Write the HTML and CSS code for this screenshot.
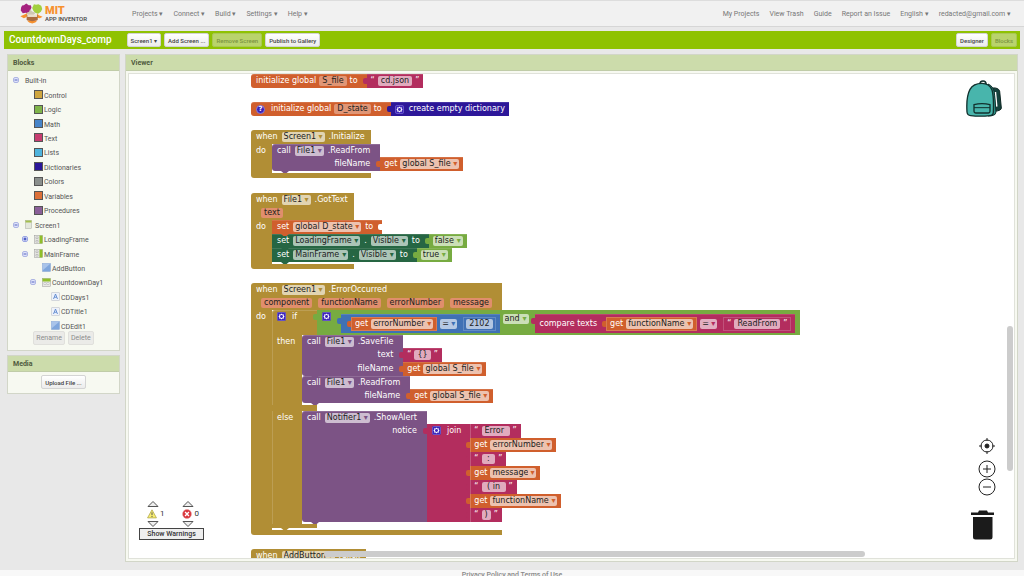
FILE: index.html
```html
<!DOCTYPE html>
<html lang="en">
<head>
<meta charset="utf-8">
<title>MIT App Inventor</title>
<link rel="stylesheet" href="styles.css">
</head>
<body>
<svg class="defs" aria-hidden="true">
  <symbol id="gear" viewBox="0 0 16 16"><rect width="16" height="16" rx="3" fill="#3a22b8"/><rect x="1" y="1" width="14" height="14" rx="2" fill="none" stroke="#8d80d8" stroke-width="1"/><path d="M8 2.500l1.500 2 2.500-.6v2.600L13.500 8 12 9.500v2.600l-2.500-.6-1.500 2-1.500-2-2.500.6V9.500L2.500 8 4 6.500V3.900l2.500.6z" fill="#fff"/><circle cx="8" cy="8" r="2.600" fill="#3a22b8"/></symbol>
  <symbol id="minus" viewBox="0 0 12 12"><rect x="1" y="1" width="10" height="10" rx="3" fill="#dfe4fb" stroke="#98a2dc" stroke-width="1.500"/><path d="M3 6h6" stroke="#4a58b8" stroke-width="1.800"/></symbol>
  <symbol id="plus" viewBox="0 0 12 12"><rect x="1" y="1" width="10" height="10" rx="3" fill="#dfe4fb" stroke="#7f8cdc" stroke-width="1.500"/><path d="M3 6h6M6 3v6" stroke="#2334b4" stroke-width="2"/></symbol>
  <symbol id="screen" viewBox="0 0 18 18"><rect x="3" y="1" width="12" height="16" fill="#e4e8dc" stroke="#a8aaa2"/><path d="M3 1h12v4H3z" fill="#a3bf4f"/></symbol>
  <symbol id="frame" viewBox="0 0 18 18"><rect x="1" y="1" width="16" height="16" fill="#e4e4e0" stroke="#999"/><path d="M11 1h6v16h-6z" fill="#8fbf2a"/><path d="M4 4h4v3H4zM4 11h4v3H4z" fill="#fff" stroke="#999"/></symbol>
  <symbol id="hframe" viewBox="0 0 18 18"><rect x="1" y="1" width="16" height="16" fill="#e9e9e4" stroke="#999"/><path d="M1 1h16v6H1z" fill="#8fbf2a"/><path d="M4 9h4v4H4zM10 9h4v4h-4z" fill="#fff" stroke="#aaa"/></symbol>
  <symbol id="btn" viewBox="0 0 18 18"><rect x="1" y="1" width="16" height="16" fill="#7fa6dc" stroke="#86a4d0"/><path d="M1 1h16L1 15z" fill="#a9c4ea"/></symbol>
  <symbol id="label" viewBox="0 0 18 18"><rect x="1" y="1" width="16" height="16" rx="1" fill="#eef2fa" stroke="#b4b8c2"/><path d="M5 14L9 4l4 10M6.500 10.500h5" fill="none" stroke="#5b88cf" stroke-width="1.800"/></symbol>
</svg>

<header class="top">
  <a class="logo" href="#">
    <svg viewBox="0 0 72 60" aria-hidden="true">
      <path d="M14 6l7-5 7 5h6l2 7-3 7 1 7-8 3-7-2-8 1-6-8 1-8 3-6z" fill="#a5227f"/>
      <path d="M43 3l6 2 7-2 8 5 3 9-4 8-8 6-9-3-5-7-3-7z" fill="#a2cf3f"/>
      <path d="M32 18l6 6 10 4-6 6H26l-7-5 10-4z" fill="#cfc7b4"/>
      <path d="M12 34l12-5-2 11-8 4-10-6zM52 29l5 6 11 4-8 5-8-2zM23 50h30l-6 6-9 3-9-3z" fill="#f7912f"/>
      <path d="M22 34h32v15q-16 6-32 0z" fill="#a96b42"/><path d="M24 33h28v7H24z" fill="#ecdfd0"/>
    </svg>
    <span class="logo-text"><b>MIT</b><span>APP INVENTOR</span></span>
  </a>
  <nav class="menu">
    <button>Projects ▾</button><button>Connect ▾</button><button>Build ▾</button><button>Settings ▾</button><button>Help ▾</button>
  </nav>
  <nav class="menu links">
    <a href="#">My Projects</a><a href="#">View Trash</a><a href="#">Guide</a><a href="#">Report an Issue</a><button>English ▾</button><button>redacted@gmail.com ▾</button>
  </nav>
</header>

<div class="toolbar">
  <h1>CountdownDays_comp</h1>
  <button class="tb">Screen1 ▾</button><button class="tb">Add Screen ...</button><button class="tb" disabled>Remove Screen</button><button class="tb">Publish to Gallery</button>
  <span class="spacer"></span>
  <button class="tb">Designer</button><button class="tb" disabled>Blocks</button>
</div>

<main class="columns">
  <aside class="side">
    <section class="panel">
      <h2>Blocks</h2>
      <div class="tree-box">
        <ul class="tree">
          <li class="l0"><svg class="tg"><use href="#minus"/></svg><span>Built-in</span></li>
          <li class="l1"><i class="sw gold"></i><span>Control</span></li>
          <li class="l1"><i class="sw lime"></i><span>Logic</span></li>
          <li class="l1"><i class="sw blue"></i><span>Math</span></li>
          <li class="l1"><i class="sw pink"></i><span>Text</span></li>
          <li class="l1"><i class="sw sky"></i><span>Lists</span></li>
          <li class="l1"><i class="sw navy"></i><span>Dictionaries</span></li>
          <li class="l1"><i class="sw grey"></i><span>Colors</span></li>
          <li class="l1"><i class="sw orange"></i><span>Variables</span></li>
          <li class="l1"><i class="sw purple"></i><span>Procedures</span></li>
          <li class="l0"><svg class="tg"><use href="#minus"/></svg><svg class="ic"><use href="#screen"/></svg><span>Screen1</span></li>
          <li class="l2"><svg class="tg"><use href="#plus"/></svg><svg class="ic"><use href="#frame"/></svg><span>LoadingFrame</span></li>
          <li class="l2"><svg class="tg"><use href="#minus"/></svg><svg class="ic"><use href="#frame"/></svg><span>MainFrame</span></li>
          <li class="l3"><svg class="ic"><use href="#btn"/></svg><span>AddButton</span></li>
          <li class="l4"><svg class="tg"><use href="#minus"/></svg><svg class="ic"><use href="#hframe"/></svg><span>CountdownDay1</span></li>
          <li class="l5"><svg class="ic"><use href="#label"/></svg><span>CDDays1</span></li>
          <li class="l5"><svg class="ic"><use href="#label"/></svg><span>CDTitle1</span></li>
          <li class="l5"><svg class="ic"><use href="#btn"/></svg><span>CDEdit1</span></li>
        </ul>
      </div>
      <div class="actions"><button class="flat" disabled>Rename</button><button class="flat" disabled>Delete</button></div>
    </section>
    <section class="panel">
      <h2>Media</h2>
      <div class="upload"><button class="tb">Upload File ...</button></div>
    </section>
  </aside>

  <section class="panel viewer">
    <h2>Viewer</h2>
    <div class="workspace">
      <div class="canvas">

        <div class="node n1 line">
          <div class="blk c-orange first pre"><span>initialize global</span><input class="f" aria-label="Variable name" value="S_file"><span>to</span></div>
          <div class="blk val c-pink"><span>“</span><input class="f" aria-label="Text" value="cd.json"><span>”</span></div>
        </div>

        <div class="node n2 line">
          <div class="blk c-orange first pre"><button class="help" aria-label="Help">?</button><span>initialize global</span><input class="f" aria-label="Variable name" value="D_state"><span>to</span></div>
          <div class="blk val c-navy wide"><svg class="gear"><use href="#gear"/></svg><span>create empty dictionary</span></div>
        </div>

        <div class="node n3 event">
          <div class="head"><div class="when"><span>when</span><label class="dd"><select aria-label="Component"><option>Screen1</option></select></label><span>.Initialize</span></div></div>
          <div class="mid"><div class="do">do</div><div class="stack">
            <div class="call c-purple">
              <div class="cell top-cell"><span>call</span><label class="dd"><select aria-label="Component"><option>File1</option></select></label><span>.ReadFrom</span></div>
              <div class="cell arg">fileName</div><div class="blk val c-orange"><span>get</span><label class="dd"><select aria-label="Variable"><option>global S_file</option></select></label></div>
            </div>
          </div></div>
          <div class="foot"></div>
        </div>

        <div class="node n4 event">
          <div class="head"><div class="when"><span>when</span><label class="dd"><select aria-label="Component"><option>File1</option></select></label><span>.GotText</span></div>
            <div class="params"><span>text</span></div></div>
          <div class="mid"><div class="do">do</div><div class="stack">
            <div class="line stmt c-orange"><div class="blk pre socket"><span>set</span><label class="dd"><select aria-label="Variable"><option>global D_state</option></select></label><span>to</span></div></div>
            <div class="line stmt c-green"><div class="blk pre"><span>set</span><label class="dd"><select aria-label="Component"><option>LoadingFrame</option></select></label><span>.</span><label class="dd"><select aria-label="Property"><option>Visible</option></select></label><span>to</span></div><div class="blk val c-lime"><label class="dd"><select aria-label="Value"><option>false</option></select></label></div></div>
            <div class="line stmt c-green"><div class="blk pre"><span>set</span><label class="dd"><select aria-label="Component"><option>MainFrame</option></select></label><span>.</span><label class="dd"><select aria-label="Property"><option>Visible</option></select></label><span>to</span></div><div class="blk val c-lime"><label class="dd"><select aria-label="Value"><option>true</option></select></label></div></div>
          </div></div>
          <div class="foot"></div>
        </div>

        <div class="node n5 event">
          <div class="head"><div class="when"><span>when</span><label class="dd"><select aria-label="Component"><option>Screen1</option></select></label><span>.ErrorOccurred</span></div>
            <div class="params"><span>component</span><span>functionName</span><span>errorNumber</span><span>message</span></div></div>
          <div class="mid"><div class="do">do</div><div class="stack">
            <div class="ifblock stmt">
              <div class="line">
                <div class="if-label"><svg class="gear"><use href="#gear"/></svg><span>if</span></div>
                <div class="and val c-lime">
                  <svg class="gear"><use href="#gear"/></svg>
                  <div class="blk val tall c-blue">
                    <div class="blk val inset c-orange"><span>get</span><label class="dd"><select aria-label="Variable"><option>errorNumber</option></select></label></div>
                    <label class="dd"><select aria-label="Comparison"><option>=</option></select></label>
                    <div class="blk val inset c-blue"><input class="f" aria-label="Number" value="2102"></div>
                  </div>
                  <label class="dd op"><select aria-label="Operator"><option>and</option></select></label>
                  <div class="blk val tall c-pink">
                    <span class="ctext">compare texts</span>
                    <div class="blk val inset c-orange"><span>get</span><label class="dd"><select aria-label="Variable"><option>functionName</option></select></label></div>
                    <label class="dd"><select aria-label="Comparison"><option>=</option></select></label>
                    <div class="blk val inset c-pink"><span>“</span><input class="f" aria-label="Text" value="ReadFrom"><span>”</span></div>
                  </div>
                </div>
              </div>
              <div class="branch"><div class="b-label">then</div><div class="stack">
                <div class="call c-purple">
                  <div class="cell top-cell"><span>call</span><label class="dd"><select aria-label="Component"><option>File1</option></select></label><span>.SaveFile</span></div>
                  <div class="cell arg">text</div><div class="blk val c-pink"><span>“</span><input class="f" aria-label="Text" value="{}"><span>”</span></div>
                  <div class="cell arg">fileName</div><div class="blk val c-orange"><span>get</span><label class="dd"><select aria-label="Variable"><option>global S_file</option></select></label></div>
                </div>
                <div class="call c-purple">
                  <div class="cell top-cell"><span>call</span><label class="dd"><select aria-label="Component"><option>File1</option></select></label><span>.ReadFrom</span></div>
                  <div class="cell arg">fileName</div><div class="blk val c-orange"><span>get</span><label class="dd"><select aria-label="Variable"><option>global S_file</option></select></label></div>
                </div>
              </div></div>
              <div class="arm middle"></div>
              <div class="branch"><div class="b-label">else</div><div class="stack">
                <div class="call c-purple">
                  <div class="cell top-cell"><span>call</span><label class="dd"><select aria-label="Component"><option>Notifier1</option></select></label><span>.ShowAlert</span></div>
                  <div class="cell arg">notice</div>
                  <div class="line">
                    <div class="join val c-pink"><svg class="gear"><use href="#gear"/></svg><span>join</span></div>
                    <div class="items">
                      <div class="blk val c-pink"><span>“</span><input class="f" aria-label="Text" value="Error "><span>”</span></div>
                      <div class="blk val c-orange"><span>get</span><label class="dd"><select aria-label="Variable"><option>errorNumber</option></select></label></div>
                      <div class="blk val c-pink"><span>“</span><input class="f" aria-label="Text" value=" : "><span>”</span></div>
                      <div class="blk val c-orange"><span>get</span><label class="dd"><select aria-label="Variable"><option>message</option></select></label></div>
                      <div class="blk val c-pink"><span>“</span><input class="f" aria-label="Text" value=" ( in "><span>”</span></div>
                      <div class="blk val c-orange"><span>get</span><label class="dd"><select aria-label="Variable"><option>functionName</option></select></label></div>
                      <div class="blk val c-pink"><span>“</span><input class="f" aria-label="Text" value=")"><span>”</span></div>
                    </div>
                  </div>
                </div>
              </div></div>
              <div class="arm"></div>
            </div>
          </div></div>
          <div class="foot"></div>
        </div>

        <div class="node n6 event">
          <div class="head"><div class="when"><span>when</span><label class="dd"><select aria-label="Component"><option>AddButton</option></select></label><span>.Click</span></div></div>
        </div>
      </div>

      <div class="bar-h"></div>
      <div class="bar-v"></div>

      <div class="warnings">
        <div class="counts">
          <div class="count"><svg class="tri" viewBox="0 0 12 6"><path d="M1 5.500L6 .5l5 5z"/></svg>
            <div><svg viewBox="0 0 18 18"><path d="M9 1.500L17 16H1z" fill="#f8ee72" stroke="#b5a950" stroke-width="1.500" stroke-linejoin="round"/><path d="M9 6v5M9 12.500v2" stroke="#555" stroke-width="1.800"/></svg><span>1</span></div>
            <svg class="tri" viewBox="0 0 12 6"><path d="M1 .5L6 5.500l5-5z"/></svg></div>
          <div class="count"><svg class="tri" viewBox="0 0 12 6"><path d="M1 5.500L6 .5l5 5z"/></svg>
            <div><svg viewBox="0 0 18 18"><circle cx="9" cy="9" r="8" fill="#d9333a" stroke="#e59a9c"/><path d="M5.500 5.500l7 7M12.500 5.500l-7 7" stroke="#fff" stroke-width="2.500"/></svg><span>0</span></div>
            <svg class="tri" viewBox="0 0 12 6"><path d="M1 .5L6 5.500l5-5z"/></svg></div>
        </div>
        <button class="show">Show Warnings</button>
      </div>

      <svg class="backpack" viewBox="0 0 108 114" aria-label="Backpack">
        <path d="M78 24q20-2 23 10l5 50q0 8-20 10" fill="#16413c" stroke="#0c2522" stroke-width="3"/><path d="M88 36l4 44" stroke="#fff" stroke-width="5"/>
        <path d="M42 12q0-9 9-9t9 9" fill="none" stroke="#12312e" stroke-width="5"/>
        <path d="M66 12q18 6 20 34l4 50q0 9-12 11l-12 1z" fill="#2d8f86" stroke="#12312e" stroke-width="3"/>
        <path d="M3 96Q0 50 12 28 22 10 48 10q22 0 30 20 6 20 4 66 0 10-10 11-30 3-58 0-10-1-11-11z" fill="#48b5ac" stroke="#12312e" stroke-width="4"/>
        <path d="M24 74q24-6 48 0v20q0 5-5 5H29q-5 0-5-5z" fill="#48b5ac" stroke="#12312e" stroke-width="4"/><path d="M24 83h48" stroke="#12312e" stroke-width="3"/>
      </svg>
      <div class="zoom">
        <button aria-label="Center"><svg viewBox="0 0 18 18"><circle cx="9" cy="9" r="6" /><circle cx="9" cy="9" r="2" class="dot"/><path d="M9 1v3M9 14v3M1 9h3M14 9h3"/></svg></button>
        <button aria-label="Zoom in"><svg viewBox="0 0 18 18"><circle cx="9" cy="9" r="8"/><path d="M9 5v8M5 9h8"/></svg></button>
        <button aria-label="Zoom out"><svg viewBox="0 0 18 18"><circle cx="9" cy="9" r="8"/><path d="M5 9h8"/></svg></button>
      </div>
      <svg class="trash" viewBox="0 0 23 30" aria-label="Trash"><path d="M0 2.500h7L8 .5h8l1 2h6V5H0zM2 7h19.500v20q0 2.500-2.500 2.500H4.500Q2 29.500 2 27z" fill="#1b1b1b"/></svg>
    </div>
  </section>
</main>
<footer class="legal"><a href="#">Privacy Policy and Terms of Use</a></footer>
</body>
</html>
```
FILE: styles.css
```css
* { box-sizing: border-box; }
body {
  margin: 0;
  height: 100vh;
  overflow: hidden;
  display: flex;
  flex-direction: column;
  background: #e8e8e8;
  font: 7px/10px Roboto, sans-serif;
  color: #555;
}
button, input, select { font: inherit; color: inherit; margin: 0; }
a { color: inherit; text-decoration: none; }
ul { list-style: none; margin: 0; padding: 0; }
.defs { display: none; }

/* Header */
.top {
  flex: none;
  height: 27px;
  display: flex;
  align-items: center;
  padding: 0 13px 0 19px;
  background: #f1f1f1;
  border-top: 1px solid #ddd;
  border-bottom: 1px solid #d6d6d6;
}
.logo { display: flex; align-items: center; width: 113px; gap: 1px; }
.logo svg { width: 25px; height: 21px; }
.logo-text { display: flex; flex-direction: column; }
.logo-text b { font-size: 11px; line-height: 11px; font-weight: 900; color: #f7912f; }
.logo-text span { font-size: 6px; line-height: 6px; font-weight: 500; color: #444; white-space: nowrap; }
.menu { display: flex; gap: 10px; }
.links { margin-left: auto; }
.menu button { border: 0; background: none; padding: 0; }
.menu a, .menu button { color: #777; white-space: nowrap; }

.toolbar {
  flex: none;
  height: 18px;
  margin: 4px 4px 5px;
  padding: 0 3px 0 5px;
  display: flex;
  align-items: center;
  gap: 3px;
  background: #8fc202;
}
.toolbar h1 { margin: 0 12px 0 0; font-size: 10px; font-weight: 500; color: #fff; }
.spacer { flex: 1; }
.tb {
  height: 14px;
  padding: 0 3px;
  border: 1px solid #d4d4d4;
  border-radius: 2px;
  background: linear-gradient(#fff, #ececec);
  color: #444;
  font-size: 6px;
  font-weight: 500;
  line-height: 11px;
  white-space: nowrap;
}
.tb:disabled { background: #b9d36c; border-color: #a9c853; color: #7c9440; }

/* Columns */
.columns { flex: 1; min-height: 0; display: flex; gap: 5px; padding: 0 6px 0 7px; }
.side { width: 113px; display: flex; flex-direction: column; gap: 4px; }
.panel { background: #f7f9f1; border: 1px solid #d2d6c8; }
.panel h2 {
  margin: 0;
  height: 16px;
  padding-left: 5px;
  font-size: 7px;
  line-height: 16px;
  font-weight: 700;
  color: #4f5a3d;
  background: #ccdcab;
  border-bottom: 1px solid #c0cca8;
}
.tree-box { height: 260px; padding-top: 2px; overflow: hidden; }
.tree { height: 260px; display: grid; grid-auto-rows: 1fr; }
.tree li { display: flex; align-items: center; gap: 1px; }
.tree span { padding-top: 2px; color: #555; }
.tg { width: 6px; height: 6px; margin-right: 7px; }
.ic { width: 9px; height: 9px; }
.l0 { padding-left: 5px; }
.l0 span { padding-left: 1px; }
.l0 .tg { margin-right: 4px; }
.l1 { padding-left: 26px; }
.l2 { padding-left: 14px; }
.l2 .tg, .l4 .tg { margin-right: 5px; }
.l3 { padding-left: 34px; }
.l4 { padding-left: 22px; }
.l5 { padding-left: 43px; }
.sw { width: 9px; height: 9px; border: 1px solid #555; }
.gold { background: #cfa63f; }
.lime { background: #7fb54a; }
.blue { background: #4684c8; }
.pink { background: #c63d70; }
.sky { background: #4eb3dc; }
.navy { background: #2b1799; }
.grey { background: #8a8f8c; }
.orange { background: #dc7038; }
.purple { background: #8a5f98; }
.actions { display: flex; justify-content: center; gap: 3px; padding-bottom: 5px; }
.flat { height: 14px; padding: 0 2px; border: 1px solid #e0e0dc; border-radius: 2px; background: #ebebe8; color: #8c8c8c; line-height: 11px; }
.upload { display: flex; justify-content: center; padding: 3px 0 4px; }

.viewer { flex: 1; min-width: 0; display: flex; flex-direction: column; margin-bottom: 8px; }
.workspace { flex: 1; margin: 2px; border: 1px solid #e0e2da; background: #fff; position: relative; overflow: hidden; }

/* Block canvas: every top-level block has a place of its own */
.canvas { font: 8px/10px "DejaVu Sans", sans-serif; color: #fff; }
.node { position: absolute; left: 122px; }
.n1 { top: 0; }
.n2 { top: 28px; }
.n3 { top: 56px; }
.n4 { top: 119px; }
.n5 { top: 209px; }
.n6 { top: 475px; }

.c-orange { --c: #d05f2d; }
.c-pink { --c: #b32d5e; }
.c-navy { --c: #2d1799; }
.c-purple { --c: #7c5385; }
.c-green { --c: #266643; }
.c-lime { --c: #77ab41; }
.c-blue { --c: #3f71b5; }
.event, .ifblock { --c: #b18e35; }

.line { display: flex; align-items: flex-start; }
.blk {
  flex: none;
  display: flex;
  align-items: center;
  gap: 3px;
  height: 14px;
  padding: 0 4px;
  background: var(--c);
  box-shadow: inset 0 1px 0 rgba(255, 255, 255, .12);
  white-space: nowrap;
}
.blk.first { border-radius: 3px 0 0 3px; }
.blk.pre { padding: 0 9px 0 5px; }
.blk.wide { gap: 5px; padding: 0 4px; }
.val { position: relative; }
.val::before {
  content: "";
  position: absolute;
  left: -4px;
  top: 4px;
  width: 4px;
  height: 6px;
  border-radius: 2px 0 0 2px;
  background: var(--c);
}
.socket { position: relative; }
.socket::after {
  content: "";
  position: absolute;
  right: 0;
  top: 4px;
  width: 4px;
  height: 6px;
  border-radius: 2px 0 0 2px;
  background: #fff;
}
.stmt .blk.pre { gap: 4px; }

.f {
  field-sizing: content;
  height: 10px;
  padding: 0 3px;
  border: 0;
  border-radius: 2px;
  background: rgba(255, 255, 255, .6);
  color: #222;
  line-height: 10px;
}
.c-orange > .f { background: rgba(255, 255, 255, .35); }
.dd { position: relative; display: flex; }
.dd select {
  appearance: none;
  height: 10px;
  padding: 0 8px 0 2px;
  border: 0;
  border-radius: 2px;
  background: rgba(255, 255, 255, .62);
  color: #222;
  line-height: 10px;
}
.dd::after { content: "▾"; position: absolute; right: 2px; top: 0; color: var(--c); pointer-events: none; }
.gear { width: 9px; height: 9px; flex: none; }
.help {
  width: 9px;
  height: 9px;
  margin-right: 3px;
  padding: 0;
  border: 1px solid #8d80d8;
  border-radius: 50%;
  background: #3a22b8;
  color: #fff;
  font-size: 7px;
  line-height: 7px;
  font-weight: 700;
}

/* Event blocks */
.event { display: inline-flex; flex-direction: column; }
.head { background: var(--c); border-radius: 3px 0 0 0; white-space: nowrap; }
.when { display: flex; align-items: center; gap: 4px; height: 14px; padding: 0 6px 0 5px; }
.params { display: flex; gap: 6px; height: 13px; padding: 1px 10px 2px; }
.params span { padding: 0 3px; border-radius: 2px; background: #e08e6c; color: #222; }
.mid { display: flex; width: 0; min-width: 100%; }
.do { flex: none; width: 21px; padding: 2px 0 0 5px; background: var(--c); }
.stack { flex: none; padding-bottom: 2px; }
.foot { height: 5px; background: var(--c); border-radius: 0 0 0 3px; }

.stmt, .call { position: relative; }
.stmt::after, .call::after {
  content: "";
  position: absolute;
  left: 9px;
  bottom: -2px;
  width: 8px;
  height: 2px;
  background: var(--c);
  clip-path: polygon(0 0, 100% 0, 70% 100%, 30% 100%);
  z-index: 1;
}
.call { display: grid; grid-template-columns: auto auto; justify-content: start; border-radius: 3px; }
.cell { grid-column: 1; background: var(--c); padding: 0 10px 0 5px; white-space: nowrap; }
.top-cell { display: flex; align-items: center; gap: 4px; height: 13px; border-radius: 3px 0 0 0; box-shadow: inset 0 1px 0 rgba(255, 255, 255, .15); }
.arg { min-height: 14px; padding-top: 2px; text-align: right; }
.call > .val { justify-self: start; }
.cell:nth-last-child(2) { border-radius: 0 0 0 3px; }

/* If / then / else */
.if-label { flex: none; width: 45px; height: 25px; display: flex; align-items: flex-start; gap: 6px; padding: 2px 0 0 5px; background: var(--c); border-radius: 3px 0 0 0; box-shadow: inset 1px 1px 0 rgba(255, 255, 255, .15); }
.branch { display: flex; }
.b-label { flex: none; width: 30px; padding: 2px 0 0 5px; background: var(--c); box-shadow: inset 1px 0 0 rgba(255, 255, 255, .15); }
.arm { width: 45px; height: 4px; background: var(--c); }
.arm.middle { height: 6px; }
.and { flex: none; display: flex; align-items: flex-start; height: 25px; padding: 2px 5px 0; background: var(--c); }
.and > .tall { height: 19px; margin-top: 2px; padding: 0 4px 0 10px; }
.and > .tall.c-pink { padding-left: 5px; }
.and > .gear + .tall { margin-left: 10px; }
.op { margin: 2px 6px 0 3px; }
.ctext { margin-right: 6px; }
.inset { height: 14px; box-shadow: inset 0 0 0 1px rgba(255, 255, 255, .18); }
.inset.c-blue { padding: 0 3px; }
.dd + .inset { margin-left: 3px; }
.join { flex: none; align-self: stretch; display: flex; align-items: flex-start; gap: 6px; padding: 2px 9px 0 5px; background: var(--c); }
.items { display: flex; flex-direction: column; align-items: flex-start; }
.items .val { box-shadow: inset 1px 0 0 rgba(255, 255, 255, .2); }

/* Workspace overlays */
.bar-h { position: absolute; left: 22%; right: 149px; bottom: 1px; height: 6px; border-radius: 3px; background: #ccc; }
.bar-v { position: absolute; right: 1px; top: 52%; height: 145px; width: 6px; border-radius: 3px; background: #ccc; }
.warnings { position: absolute; left: 10px; bottom: 18px; width: 65px; color: #333; }
.counts { display: flex; gap: 17px; padding: 0 0 1px 8px; }
.count { display: flex; flex-direction: column; gap: 1px; }
.count div { display: flex; align-items: center; gap: 3px; height: 12px; font: 8px/12px Roboto, sans-serif; }
.count div svg { width: 10px; height: 10px; }
.tri { width: 12px; height: 6px; fill: #eee; stroke: #555; stroke-width: 1; }
.show { display: block; width: 100%; height: 12px; padding: 0; border: 1px solid #444; background: #eee; font-weight: 500; line-height: 10px; }
.backpack { position: absolute; right: 12px; top: 6px; width: 36px; height: 38px; }
.zoom { position: absolute; right: 18px; bottom: 62px; display: flex; flex-direction: column; }
.zoom button { width: 18px; height: 18px; padding: 0; border: 0; background: none; }
.zoom button:first-child { margin-bottom: 5px; }
.zoom svg { display: block; width: 18px; height: 18px; fill: none; stroke: #222; stroke-width: 1; }
.zoom .dot { fill: #222; }
.trash { position: absolute; right: 20px; bottom: 18px; width: 23px; height: 30px; }

.legal { flex: none; height: 6px; background: #f8f8f8; text-align: center; font-weight: 500; color: #888; }
```
